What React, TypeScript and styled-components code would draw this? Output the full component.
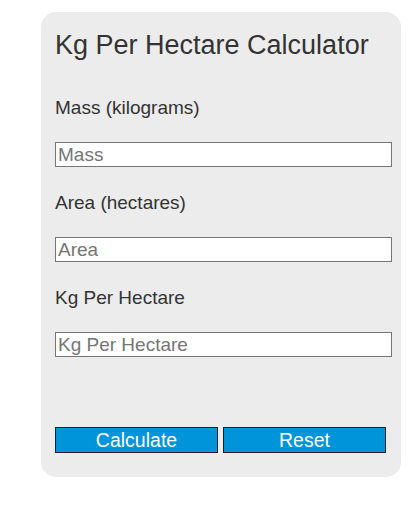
import styled, { createGlobalStyle } from "styled-components"

const GlobalStyle = createGlobalStyle`
  body {
    margin: 0;
    background: #ffffff;
    font-family: "Liberation Sans", Arial, sans-serif;
  }
`

export default function App() {
  return (
    <>
      <GlobalStyle />
      <Card>
        <Title>Kg Per Hectare Calculator</Title>
        <Label first>Mass (kilograms)</Label>
        <Input placeholder="Mass" />
        <Label>Area (hectares)</Label>
        <Input placeholder="Area" />
        <Label>Kg Per Hectare</Label>
        <Input placeholder="Kg Per Hectare" />
        <Buttons>
          <Button>Calculate</Button>
          <Button>Reset</Button>
        </Buttons>
      </Card>
    </>
  )
}

const Card = styled.div`
  box-sizing: border-box;
  width: 360px;
  margin: 12px 0 0 41px;
  padding: 18px 14px 24px;
  background: #ececec;
  border-radius: 15px;
  color: #333333;
`

const Title = styled.h2`
  margin: 0;
  font-size: 27px;
  line-height: 31px;
  font-weight: normal;
`

const Label = styled.div<{ first?: boolean }>`
  margin-top: ${(p) => (p.first ? "36px" : "25px")};
  font-size: 19px;
  line-height: 21px;
`

const Input = styled.input`
  display: block;
  box-sizing: border-box;
  width: 337px;
  height: 25px;
  margin: 24px 0 0;
  padding: 1px 2px;
  border: 1px solid #767676;
  background: #ffffff;
  font-family: inherit;
  font-size: 19px;
  color: #333333;
  outline: none;

  &::placeholder {
    color: #767676;
  }
`

const Buttons = styled.div`
  display: flex;
  gap: 5px;
  margin-top: 70px;
`

const Button = styled.button`
  box-sizing: border-box;
  width: 163px;
  height: 26px;
  padding: 0;
  border: 1px solid #1f1f1f;
  background: #0095db;
  color: #ffffff;
  font-family: inherit;
  font-size: 19.5px;
  line-height: 22px;
  cursor: pointer;
`
